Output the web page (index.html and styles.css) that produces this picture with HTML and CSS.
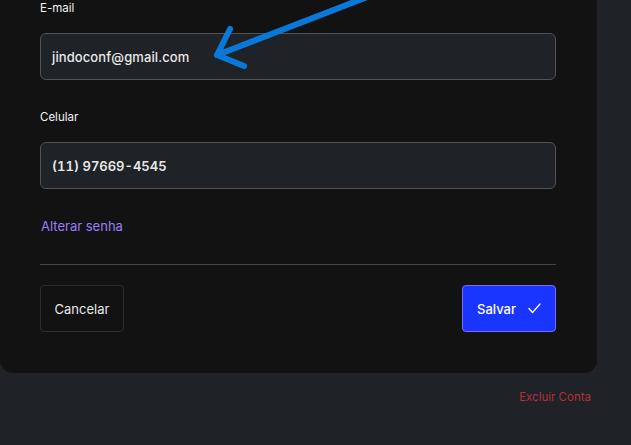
FILE: index.html
```html
<!DOCTYPE html>
<html lang="pt-BR">
<head>
<meta charset="utf-8">
<link rel="stylesheet" href="styles.css">
</head>
<body>
<div class="page">
  <form class="card">
    <label class="label">E-mail</label>
    <div class="field"><span class="value">jindoconf@gmail.com</span></div>
    <label class="label label-gap">Celular</label>
    <div class="field"><span class="value phone">(11) 97669-4545</span></div>
    <a class="link">Alterar senha</a>
    <hr class="divider">
    <div class="actions">
      <button type="button" class="btn btn-cancel">Cancelar</button>
      <button type="button" class="btn btn-save">Salvar
        <svg class="check" width="13" height="11" viewBox="0 0 13 11"><path d="M1 5.5 L4.5 9.5 L12 1" fill="none" stroke="#fff" stroke-width="1.3" stroke-linecap="round" stroke-linejoin="round"/></svg>
      </button>
    </div>
  </form>
  <div class="footer"><a class="danger">Excluir Conta</a></div>
  <svg class="arrow" width="631" height="90" viewBox="0 0 631 90">
    <g fill="none" stroke="#0a78d8" stroke-width="6" stroke-linecap="round" stroke-linejoin="round">
      <path d="M375 -6 L217 55"/>
      <path d="M230 29 L217 55 L244 66"/>
    </g>
  </svg>
</div>
</body>
</html>
```

FILE: styles.css
```css
* { box-sizing: border-box; }
html, body {
  margin: 0;
  padding: 0;
  background: #1f2226;
  font-family: Inter, "Liberation Sans", sans-serif;
  color: #e6e6e6;
}
.page {
  position: relative;
  width: 631px;
  height: 445px;
  overflow: hidden;
}
.card {
  width: 597px;
  background: #121212;
  border-radius: 0 0 13px 13px;
  padding: 0 41px 41px 40px;
  display: flex;
  flex-direction: column;
}
.label {
  display: block;
  font-size: 11.5px;
  font-weight: 400;
  line-height: 16px;
  height: 16px;
  margin-bottom: 17px;
  color: #f2f2f2;
}
.label-gap { margin-top: 29px; }
.field {
  height: 47px;
  border: 1.5px solid #505256;
  border-radius: 6px;
  background: #1f2226;
  display: flex;
  align-items: center;
  padding-left: 11px;
}
.value {
  font-size: 13px;
  font-weight: 500;
  color: #e8e8e8;
  letter-spacing: 0.1px;
}
.phone {
  font-weight: 600;
  font-variant-numeric: tabular-nums;
  letter-spacing: 0;
}
.link {
  margin-top: 29px;
  font-size: 13px;
  line-height: 16px;
  color: #9b7df7;
  padding-left: 1px;
}
.divider {
  margin: 30px 0 0;
  border: 0;
  height: 1px;
  background: #464646;
}
.actions {
  margin-top: 20px;
  display: flex;
  justify-content: space-between;
}
.btn {
  height: 47px;
  border-radius: 4px;
  font-family: Inter, "Liberation Sans", sans-serif;
  font-size: 13px;
  color: #e8e8e8;
  display: flex;
  align-items: center;
}
.btn-cancel {
  width: 84px;
  background: #121212;
  border: 1px solid #2c2c2c;
  justify-content: center;
}
.btn-save {
  width: 94px;
  background: #1a35ff;
  border: 1px solid #7b6af2;
  color: #fff;
  padding: 0 14px 0 14px;
  justify-content: space-between;
  font-weight: 500;
}
.check { display: block; }
.footer {
  display: flex;
  justify-content: flex-end;
  padding: 16px 40px 0 0;
}
.danger {
  font-size: 11.5px;
  line-height: 16px;
  color: #b3303b;
}
.arrow {
  position: absolute;
  left: 0;
  top: 0;
  pointer-events: none;
}
```
